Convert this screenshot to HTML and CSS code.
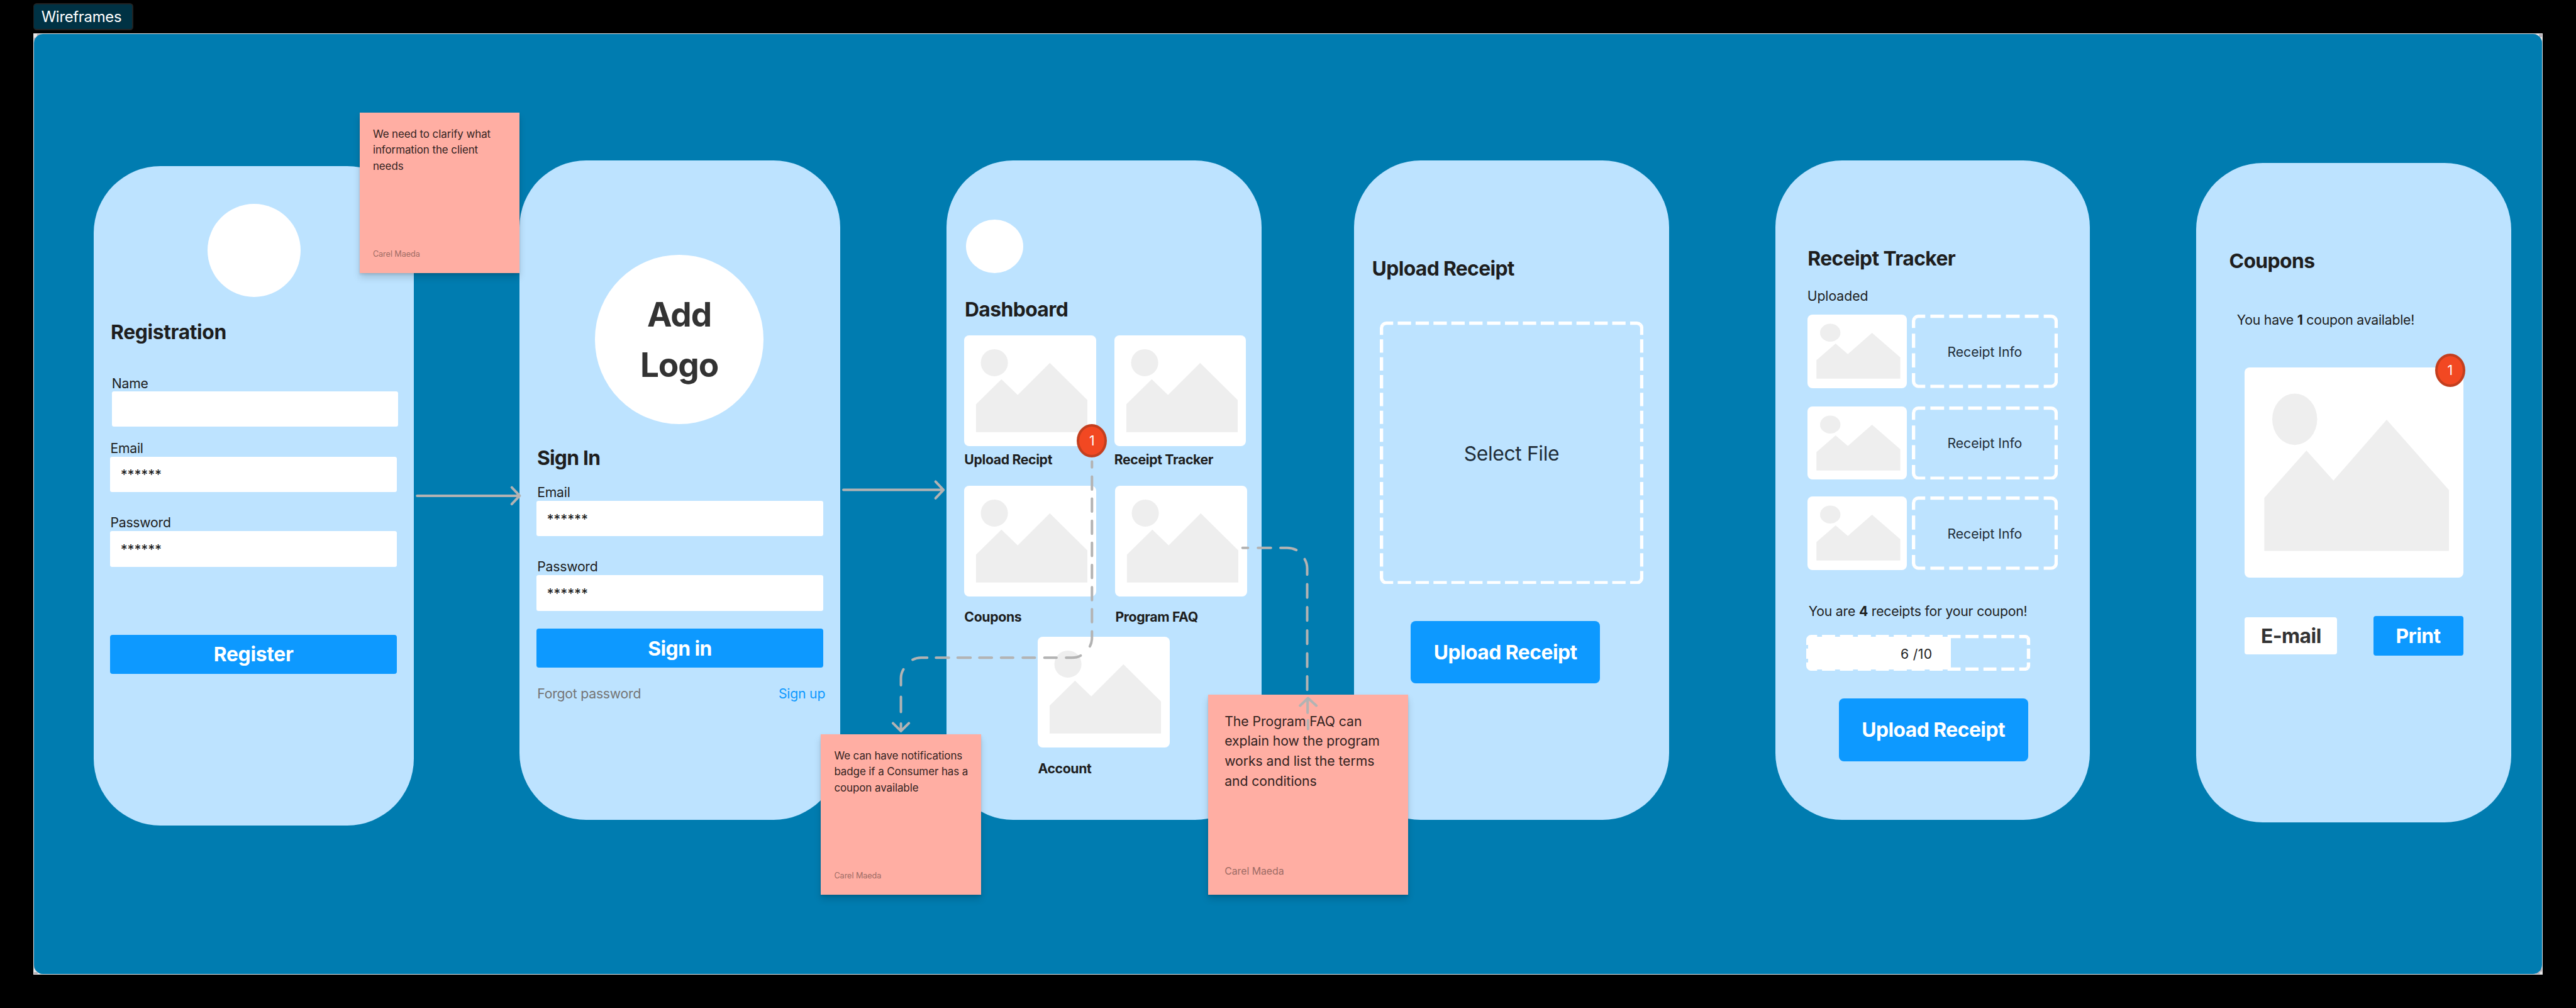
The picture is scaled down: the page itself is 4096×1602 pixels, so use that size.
FILE: index.html
```html
<!DOCTYPE html>
<html lang="en">
<head>
<meta charset="utf-8">
<title>Wireframes</title>
<link rel="stylesheet" href="styles.css">
</head>
<body>
<svg class="defs" aria-hidden="true">
  <symbol id="photo" viewBox="0 0 316 266" preserveAspectRatio="none">
    <circle cx="72.5" cy="65.5" r="32.5"/>
    <path d="M28.5 165L89.5 105L128.5 143L205.5 66L295.5 155V232H28.5Z"/>
  </symbol>
  <symbol id="info-outline" viewBox="0 0 350 176">
    <path stroke-dasharray="33 12.3" stroke-dashoffset="7.6" d="M7.5 7.5A12 12 0 0 1 16 4H334A12 12 0 0 1 342.5 7.5M7.5 168.5A12 12 0 0 0 16 172H334A12 12 0 0 0 342.5 168.5"/>
    <path stroke-dasharray="34 13.4" stroke-dashoffset="8.6" d="M7.5 7.5A12 12 0 0 0 4 16V160A12 12 0 0 0 7.5 168.5M342.5 7.5A12 12 0 0 1 346 16V160A12 12 0 0 1 342.5 168.5"/>
  </symbol>
</svg>

<main class="canvas">
  <div class="frame-label">Wireframes</div>
  <div class="frame"><div class="frame-fill"></div></div>

  <section class="phone phone-registration">
    <div class="avatar"></div>
    <h2>Registration</h2>
    <label class="name-label">Name</label>
    <div class="input input-name"></div>
    <label class="email-label">Email</label>
    <div class="input">******</div>
    <label class="password-label">Password</label>
    <div class="input input-password">******</div>
    <div class="button wide">Register</div>
  </section>

  <section class="phone phone-signin">
    <div class="logo">Add<br>Logo</div>
    <h2>Sign In</h2>
    <label class="email-label">Email</label>
    <div class="input">******</div>
    <label class="password-label">Password</label>
    <div class="input input-password">******</div>
    <div class="button wide">Sign in</div>
    <div class="links"><span>Forgot password</span><a>Sign up</a></div>
  </section>

  <section class="phone phone-dashboard">
    <div class="avatar"></div>
    <h2>Dashboard</h2>
    <div class="tiles tiles-top">
      <div class="tile"><div class="picture"><svg><use href="#photo"/></svg></div><b>Upload Recipt</b></div>
      <div class="tile"><div class="picture"><svg><use href="#photo"/></svg></div><b>Receipt Tracker</b></div>
    </div>
    <div class="tiles tiles-middle">
      <div class="tile"><div class="picture"><svg><use href="#photo"/></svg></div><b>Coupons</b></div>
      <div class="tile"><div class="picture"><svg><use href="#photo"/></svg></div><b>Program FAQ</b></div>
    </div>
    <div class="tiles tiles-bottom">
      <div class="tile"><div class="picture"><svg><use href="#photo"/></svg></div><b>Account</b></div>
    </div>
    <div class="badge">1</div>
  </section>

  <section class="phone phone-upload">
    <h2>Upload Receipt</h2>
    <div class="dropzone">
      <svg class="outline" viewBox="0 0 632 630">
        <path stroke-dasharray="32 10.86" stroke-dashoffset="6.6" d="M7.5 7.5A12 12 0 0 1 16 4H616A12 12 0 0 1 624.5 7.5M7.5 622.5A12 12 0 0 0 16 626H616A12 12 0 0 0 624.5 622.5"/>
        <path stroke-dasharray="32 10.71" stroke-dashoffset="6.6" d="M7.5 7.5A12 12 0 0 0 4 16V614A12 12 0 0 0 7.5 622.5M624.5 7.5A12 12 0 0 1 628 16V614A12 12 0 0 1 624.5 622.5"/>
      </svg>
      <span>Select File</span>
    </div>
    <div class="button large">Upload Receipt</div>
  </section>

  <section class="phone phone-tracker">
    <h2>Receipt Tracker</h2>
    <p class="uploaded">Uploaded</p>
    <div class="receipts">
      <div class="receipt"><div class="picture"><svg><use href="#photo"/></svg></div><div class="info"><svg class="outline"><use href="#info-outline"/></svg><span>Receipt Info</span></div></div>
      <div class="receipt"><div class="picture"><svg><use href="#photo"/></svg></div><div class="info"><svg class="outline"><use href="#info-outline"/></svg><span>Receipt Info</span></div></div>
      <div class="receipt"><div class="picture"><svg><use href="#photo"/></svg></div><div class="info"><svg class="outline"><use href="#info-outline"/></svg><span>Receipt Info</span></div></div>
    </div>
    <p class="remaining">You are <b>4</b> receipts for your coupon!</p>
    <div class="progress">
      <svg class="outline" viewBox="0 0 537 86">
        <path stroke-dasharray="31.3 11.7" stroke-dashoffset="11" d="M6.3 6.3A8 8 0 0 1 12 4H525A8 8 0 0 1 530.7 6.3M6.3 79.7A8 8 0 0 0 12 82H525A8 8 0 0 0 530.7 79.7"/>
        <path stroke-dasharray="24.4 8.8" stroke-dashoffset="6.1" d="M6.3 6.3A8 8 0 0 0 4 12V74A8 8 0 0 0 6.3 79.7M530.7 6.3A8 8 0 0 1 533 12V74A8 8 0 0 1 530.7 79.7"/>
      </svg>
      <div class="progress-fill">6 /10</div>
    </div>
    <div class="button large">Upload Receipt</div>
  </section>

  <section class="phone phone-coupons">
    <h2>Coupons</h2>
    <p class="available">You have <b>1</b> coupon available!</p>
    <div class="picture"><svg><use href="#photo"/></svg></div>
    <div class="actions">
      <div class="button email">E-mail</div>
      <div class="button print">Print</div>
    </div>
    <div class="badge">1</div>
  </section>

  <article class="note note-clarify"><p>We need to clarify what information the client needs</p><footer>Carel Maeda</footer></article>
  <article class="note note-badge"><p>We can have notifications badge if a Consumer has a coupon available</p><footer>Carel Maeda</footer></article>
  <article class="note note-faq"><p>The Program FAQ can explain how the program works and list the terms and conditions</p><footer>Carel Maeda</footer></article>

  <svg class="connectors" viewBox="0 0 6176 2416">
    <!-- Registration to Sign In -->
    <path d="M1000 1188H1245M1227 1168L1246 1188L1227 1208"/>
    <!-- Sign In to Dashboard -->
    <path d="M2022 1174H2261M2243 1154L2262 1174L2243 1194"/>
    <!-- Notification badge to note -->
    <path d="M2618 1106V1120M2618 1142V1173M2618 1195V1226M2618 1248V1279M2618 1301V1332M2618 1354V1385M2618 1407V1438M2618 1460V1491M2618 1513V1528Q2618 1540 2613 1549M2591 1571Q2582 1576 2570 1576H2556M2533 1576H2504M2481 1576H2452M2429 1576H2400M2378 1576H2348M2327 1576H2296M2275 1576H2244M2223 1576H2208Q2197 1576 2188 1581M2166 1604Q2160 1614 2160 1625V1642M2160 1670V1706M2160 1734V1752M2141 1733L2160 1752L2179 1733"/>
    <!-- Program FAQ to note -->
    <path d="M2979 1313H2992M3016 1313H3047M3070 1313H3086Q3098 1313 3108 1318M3128 1340Q3134 1350 3134 1362V1377M3134 1400V1432M3134 1455V1487M3134 1511V1543M3134 1566V1598M3134 1621V1653M3135 1676V1708M3136 1726V1747M3117 1691L3136 1673L3156 1691"/>
  </svg>
</main>
</body>
</html>
```
FILE: styles.css
```css
/* 1rem is 100 design units */
html {
  font-size: 66.321px;
}

* {
  box-sizing: border-box;
}

body {
  margin: 0;
  background: #000;
  font-family: Inter, "Liberation Sans", sans-serif;
  font-weight: 400;
  color: #1e1e1e;
}

svg {
  display: block;
}

.defs {
  position: absolute;
  width: 0;
  height: 0;
}

.canvas {
  position: relative;
  width: 61.76rem;
  height: 24.155rem;
  overflow: hidden;
}

/* Frame */

.frame-label {
  position: absolute;
  left: 0.8rem;
  top: 0.08rem;
  width: 2.4rem;
  height: 0.64rem;
  padding-left: 0.175rem;
  border: 0.04rem solid #222;
  border-left-width: 0.01rem;
  border-radius: 0.08rem;
  background: #003244;
  color: #fff;
  font-size: 0.36rem;
  line-height: 0.61rem;
  letter-spacing: -0.0116em;
}

.frame {
  position: absolute;
  left: 0.8rem;
  top: 0.8rem;
  width: 60.16rem;
  height: 22.56rem;
  border: 0.02rem solid #e6e6e6;
  background: repeating-conic-gradient(#b8b0b8 0 25%, #e6e6e6 0 50%) 0 0 / 0.16rem 0.16rem;
}

.frame-fill {
  height: 100%;
  border-radius: 0.22rem;
  background: #007cb0;
}

/* Phones */

.phone {
  position: absolute;
  top: 3.84rem;
  width: 7.55rem;
  height: 15.8rem;
  border-radius: 1.6rem;
  background: #bde3ff;
  display: flex;
  flex-direction: column;
  align-items: flex-start;
  font-size: 0.32rem;
  line-height: 0.4rem;
  letter-spacing: -0.011em;
}

h2 {
  margin: 0;
  font-size: 0.48rem;
  font-weight: 700;
  line-height: 0.62rem;
  letter-spacing: -0.019em;
  margin-bottom: -0.02rem;
  padding-left: 0.01rem;
}

p {
  margin: 0;
}

label {
  margin-left: 0.015rem;
}

.avatar {
  border-radius: 50%;
  background: #fff;
}

.input {
  width: 6.87rem;
  height: 0.85rem;
  padding: 0.24rem 0.245rem;
  border-radius: 0.05rem;
  background: #fff;
  letter-spacing: -0.007em;
  font-weight: 500;
}

.button {
  display: flex;
  align-items: center;
  justify-content: center;
  padding-top: 0.02rem;
  border-radius: 0.06rem;
  background: #0d99ff;
  color: #fff;
  font-size: 0.48rem;
  font-weight: 700;
  letter-spacing: -0.0167em;
}

.wide {
  width: 6.87rem;
  height: 0.94rem;
  letter-spacing: -0.009em;
}

.large {
  width: 4.535rem;
  height: 1.505rem;
  border-radius: 0.12rem;
}

.picture {
  border-radius: 0.12rem;
  background: #fff;
}

.picture svg {
  width: 100%;
  height: 100%;
  fill: #eee;
}

.badge {
  position: absolute;
  width: 0.72rem;
  height: 0.8rem;
  border: 0.075rem solid #c33f1f;
  border-radius: 50%;
  background: #f24822;
  color: #fff;
  line-height: 0.67rem;
  text-align: center;
}

.outline {
  position: absolute;
  inset: 0;
  width: 100%;
  height: 100%;
  fill: none;
  stroke: #fff;
  stroke-width: 8;
}

/* Registration */

.phone-registration {
  left: 2.24rem;
  top: 3.98rem;
  width: 7.68rem;
  padding-left: 0.405rem;
}

.phone-registration .avatar {
  width: 2.23rem;
  height: 2.23rem;
  margin: 0.9rem 0 0 2.335rem;
}

.phone-registration h2 {
  margin-top: 0.535rem;
  letter-spacing: -0.0116em;
}

.phone-registration .name-label {
  margin: 0.735rem 0 0 0.035rem;
}

.phone-registration .input-name {
  margin-left: 0.035rem;
}

.phone-registration .email-label {
  margin: 0.31rem 0 0;
}

.phone-registration .password-label {
  margin: 0.53rem 0 0;
}

.phone-registration .input-password {
  margin-top: 0.01rem;
}

.phone-registration .button {
  margin-top: 1.63rem;
}

/* Sign in */

.phone-signin {
  left: 12.46rem;
  width: 7.68rem;
  padding-left: 0.405rem;
}

.logo {
  width: 4.05rem;
  height: 4.05rem;
  margin: 2.27rem 0 0 1.395rem;
  padding-top: 0.84rem;
  border-radius: 50%;
  background: #fff;
  color: #333;
  font-size: 0.8rem;
  font-weight: 700;
  line-height: 1.2rem;
  letter-spacing: -0.0205em;
  text-align: center;
}

.phone-signin h2 {
  margin-top: 0.495rem;
  letter-spacing: -0.024em;
}

.phone-signin .email-label {
  margin-top: 0.345rem;
}

.phone-signin .password-label {
  margin-top: 0.525rem;
}

.phone-signin .input-password {
  margin-top: 0.01rem;
}

.phone-signin .button {
  margin-top: 0.43rem;
  letter-spacing: -0.016em;
}

.links {
  display: flex;
  justify-content: space-between;
  width: 6.92rem;
  margin-top: 0.41rem;
  padding-left: 0.015rem;
  color: #757575;
}

.links a {
  color: #0d99ff;
}

/* Dashboard */

.phone-dashboard {
  left: 22.7rem;
  padding-left: 0.42rem;
}

.phone-dashboard .avatar {
  width: 1.38rem;
  height: 1.29rem;
  margin: 1.415rem 0 0 0.04rem;
}

.phone-dashboard h2 {
  margin-top: 0.56rem;
}

.tiles {
  display: flex;
  gap: 0.435rem;
}

.tile {
  display: flex;
  flex-direction: column;
  letter-spacing: -0.0165em;
}

.tile .picture {
  width: 3.16rem;
  height: 2.66rem;
}

.tiles-top {
  margin-top: 0.33rem;
}

.tiles-top b {
  margin-top: 0.117rem;
}

.tiles-middle {
  gap: 0.46rem;
  margin-top: 0.426rem;
}

.tiles-middle b {
  margin-top: 0.284rem;
}

.tiles-bottom {
  margin: 0.276rem 0 0 1.765rem;
}

.tiles-bottom b {
  margin-top: 0.294rem;
}

.phone-dashboard .badge {
  left: 3.12rem;
  top: 6.32rem;
}

/* Upload receipt */

.phone-upload {
  left: 32.465rem;
  padding-left: 0.42rem;
}

.phone-upload h2 {
  margin-top: 2.28rem;
  letter-spacing: -0.0205em;
}

.dropzone {
  position: relative;
  display: flex;
  align-items: center;
  justify-content: center;
  width: 6.32rem;
  height: 6.3rem;
  margin: 0.98rem 0 0 0.195rem;
  color: #212d38;
  font-size: 0.48rem;
  letter-spacing: -0.0117em;
}

.dropzone span {
  margin-top: 0.04rem;
}

.phone-upload .large {
  margin: 0.875rem 0 0 0.94rem;
}

/* Receipt tracker */

.phone-tracker {
  left: 42.56rem;
  padding-left: 0.77rem;
}

.phone-tracker h2 {
  margin-top: 2.04rem;
}

.uploaded {
  margin-top: 0.41rem;
  letter-spacing: -0.002em;
}

.receipts {
  display: flex;
  flex-direction: column;
  gap: 0.4rem;
  margin-top: 0.247rem;
}

.receipt {
  display: flex;
  gap: 0.125rem;
}

.receipt:first-child {
  margin-bottom: 0.04rem;
}

.receipt .picture {
  width: 2.38rem;
  height: 1.76rem;
}

.info {
  position: relative;
  display: flex;
  align-items: center;
  justify-content: center;
  width: 3.5rem;
  height: 1.76rem;
  padding-top: 0.02rem;
  color: #212d38;
  letter-spacing: -0.0027em;
}

.remaining {
  margin: 0.787rem 0 0 0.03rem;
  letter-spacing: -0.01em;
}

.progress {
  position: relative;
  width: 5.37rem;
  height: 0.86rem;
  margin: 0.373rem 0 0 -0.02rem;
  padding: 0.04rem;
}

.progress-fill {
  width: 3.42rem;
  height: 100%;
  padding: 0.21rem 0 0 2.215rem;
  background: #fff;
  letter-spacing: 0.0165em;
}

.phone-tracker .large {
  margin: 0.66rem 0 0 0.755rem;
}

/* Coupons */

.phone-coupons {
  left: 52.66rem;
  top: 3.9rem;
  padding-left: 0.775rem;
}

.phone-coupons h2 {
  margin-top: 2.045rem;
}

.available {
  margin: 0.919rem 0 0 0.195rem;
}

.phone-coupons .picture {
  width: 5.24rem;
  height: 5.04rem;
  margin: 0.936rem 0 0 0.383rem;
}

.actions {
  display: flex;
  align-items: center;
  justify-content: space-between;
  width: 5.24rem;
  margin: 0.92rem 0 0 0.383rem;
}

.email {
  width: 2.22rem;
  height: 0.9rem;
  background: #fff;
  color: #333;
}

.print {
  width: 2.16rem;
  height: 0.955rem;
}

.phone-coupons .badge {
  left: 5.72rem;
  top: 4.58rem;
}

/* Sticky notes */

.note {
  position: absolute;
  display: flex;
  flex-direction: column;
  justify-content: space-between;
  width: 15em;
  height: 15em;
  padding: 1.27em 1em 1.2em 1.25em;
  background: #ffaea3;
  box-shadow: 0 0.1rem 0.16rem rgba(0, 0, 0, 0.15), 0 0.03rem 0.05rem rgba(0, 0, 0, 0.1);
  color: #33231f;
  font-size: 0.256rem;
  line-height: 1.5;
  letter-spacing: -0.006em;
}

.note footer {
  color: #9e6c65;
  font-size: 0.75em;
}

.note-clarify {
  left: 8.62rem;
  top: 2.7rem;
}

.note-badge {
  left: 19.68rem;
  top: 17.6rem;
}

.note-faq {
  left: 28.96rem;
  top: 16.64rem;
  font-size: 0.32rem;
  letter-spacing: -0.003em;
}

/* Connectors */

.connectors {
  position: absolute;
  left: 0;
  top: 0;
  width: 61.76rem;
  height: 24.16rem;
  fill: none;
  stroke: #b3b3b3;
  stroke-width: 6;
  stroke-linecap: round;
  stroke-linejoin: round;
}
```
